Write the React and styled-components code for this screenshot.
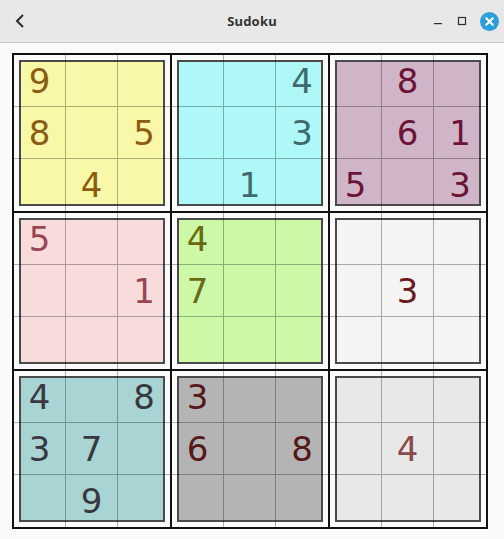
import React from "react";
import styled, { createGlobalStyle } from "styled-components";

const blocks = [
  { bg: "#f8f8a8", ink: "#8c5c12", cells: [9, 0, 0, 8, 0, 5, 0, 4, 0] },
  { bg: "#aef8f8", ink: "#3f6a6e", cells: [0, 0, 4, 0, 0, 3, 0, 1, 0] },
  { bg: "#d0b4c8", ink: "#6a1535", cells: [0, 8, 0, 0, 6, 1, 5, 0, 3] },
  { bg: "#f8dcdc", ink: "#9a4652", cells: [5, 0, 0, 0, 0, 1, 0, 0, 0] },
  { bg: "#ccf8a8", ink: "#6a6a12", cells: [4, 0, 0, 7, 0, 0, 0, 0, 0] },
  { bg: "#f4f4f4", ink: "#6a1a1a", cells: [0, 0, 0, 0, 3, 0, 0, 0, 0] },
  { bg: "#a8d4d4", ink: "#38383e", cells: [4, 0, 8, 3, 7, 0, 0, 9, 0] },
  { bg: "#b4b4b4", ink: "#561818", cells: [3, 0, 0, 6, 0, 8, 0, 0, 0] },
  { bg: "#e8e8e8", ink: "#8a4a4a", cells: [0, 0, 0, 0, 4, 0, 0, 0, 0] },
];

const GlobalStyle = createGlobalStyle`
  html, body {
    margin: 0;
    padding: 0;
    background: #fafafa;
    font-family: "DejaVu Sans", "Noto Sans", sans-serif;
  }
`;

const Window = styled.div`
  width: 504px;
  height: 539px;
  background: #fafafa;
  overflow: hidden;
`;

const TitleBar = styled.header`
  height: 42px;
  background: #e8e8e8;
  border-bottom: 1px solid #c8c8c8;
  display: grid;
  grid-template-columns: 80px 1fr 80px;
  align-items: center;
`;

const BackButton = styled.div`
  display: flex;
  align-items: center;
  padding-left: 13px;
  color: #2e2e2e;
`;

const Title = styled.h1`
  margin: 0;
  text-align: center;
  font-family: "Noto Sans", "DejaVu Sans", sans-serif;
  font-size: 13px;
  font-weight: 700;
  color: #333;
  letter-spacing: 0.2px;
`;

const Controls = styled.div`
  display: flex;
  align-items: center;
  justify-content: flex-end;
  gap: 12px;
  padding-right: 5px;
  color: #2e2e2e;
`;

const Content = styled.main`
  padding: 10px 16px 0 12px;
`;

const Board = styled.div`
  width: 476px;
  height: 476px;
  box-sizing: border-box;
  background: #111;
  padding: 2px;
  display: grid;
  grid-template-columns: repeat(3, 1fr);
  grid-template-rows: repeat(3, 1fr);
  gap: 2px;
`;

const Block = styled.div`
  position: relative;
  background: #fafafa;
  display: grid;
  grid-template-columns: repeat(3, 1fr);
  grid-template-rows: repeat(3, 1fr);

  &::before {
    content: "";
    position: absolute;
    inset: 5px;
    background: ${(p) => p.$bg};
    border: 2px solid #4a4a4a;
  }
`;

const Cell = styled.div`
  position: relative;
  z-index: 1;
  display: flex;
  align-items: center;
  justify-content: center;
  font-size: 34px;
  line-height: 1;
  color: ${(p) => p.$ink};
  border-right: ${(p) => (p.$lastCol ? "none" : "1px solid rgba(0, 0, 0, 0.3)")};
  border-bottom: ${(p) => (p.$lastRow ? "none" : "1px solid rgba(0, 0, 0, 0.3)")};
`;

function App() {
  return (
    <Window>
      <GlobalStyle />
      <TitleBar>
        <BackButton>
          <svg width="14" height="16" viewBox="0 0 14 16">
            <path d="M10 2 L4 8 L10 14" fill="none" stroke="currentColor" strokeWidth="2" />
          </svg>
        </BackButton>
        <Title>Sudoku</Title>
        <Controls>
          <svg width="12" height="12" viewBox="0 0 12 12">
            <rect x="2" y="8" width="8" height="1.2" fill="currentColor" />
          </svg>
          <svg width="12" height="12" viewBox="0 0 12 12">
            <rect x="2.5" y="2.5" width="7" height="7" fill="none" stroke="currentColor" strokeWidth="1.2" />
          </svg>
          <svg width="19" height="19" viewBox="0 0 19 19">
            <circle cx="9.5" cy="9.5" r="9.5" fill="#2b9fdb" />
            <path d="M6.3 6.3 L12.7 12.7 M12.7 6.3 L6.3 12.7" stroke="#fff" strokeWidth="2.2" strokeLinecap="round" />
          </svg>
        </Controls>
      </TitleBar>
      <Content>
        <Board>
          {blocks.map((block, b) => (
            <Block key={b} $bg={block.bg}>
              {block.cells.map((n, i) => (
                <Cell key={i} $ink={block.ink} $lastCol={i % 3 === 2} $lastRow={i > 5}>
                  {n ? n : ""}
                </Cell>
              ))}
            </Block>
          ))}
        </Board>
      </Content>
    </Window>
  );
}

export default App;
